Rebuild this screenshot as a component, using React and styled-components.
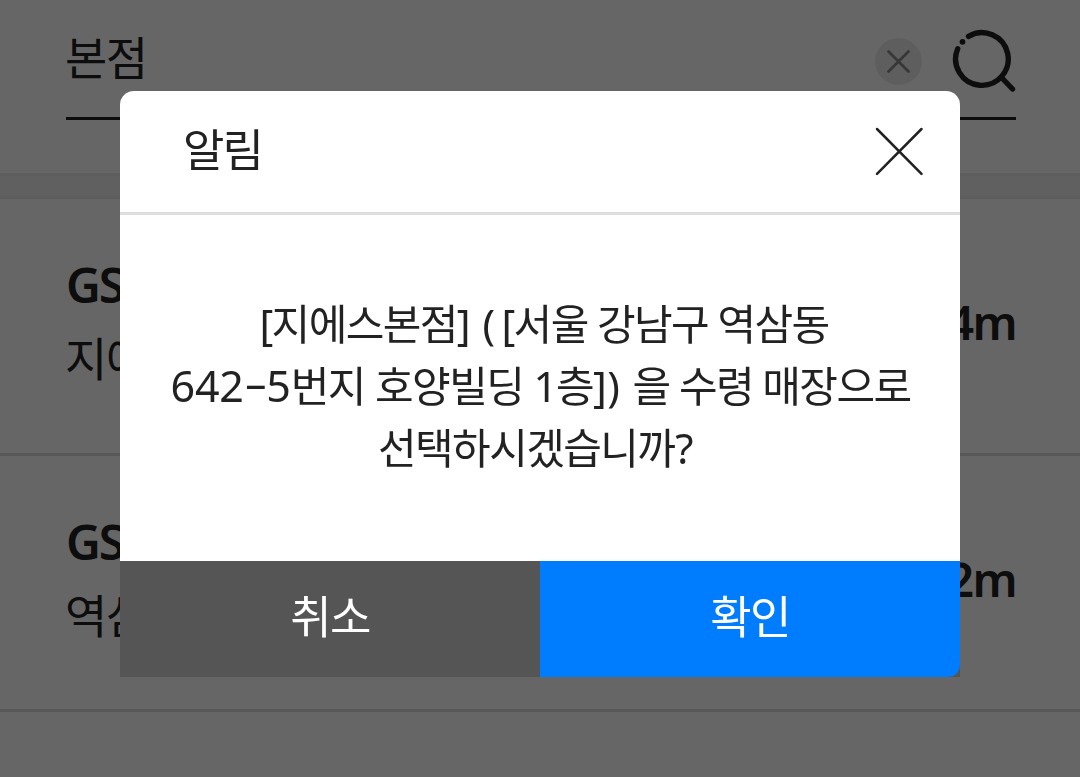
import React from 'react';
import styled, { createGlobalStyle } from 'styled-components';

const GlobalStyle = createGlobalStyle`
    * {
        box-sizing: border-box;
    }
    body {
        margin: 0;
        overflow: hidden;
        background: #fff;
        color: #222;
        font-family: 'Noto Sans', 'Noto Sans CJK KR', sans-serif;
    }
    button {
        padding: 0;
        border: 0;
        background: none;
        color: inherit;
        font: inherit;
        cursor: pointer;
    }
    svg {
        display: block;
    }
`;

const Page = styled.main`
    height: 777px;
    overflow: hidden;
`;

const SearchArea = styled.section`
    height: 173px;
    padding: 0 64px 0 66px;
`;

const SearchBar = styled.div`
    height: 120px;
    display: flex;
    align-items: flex-start;
    border-bottom: 3px solid #222;
`;

const Keyword = styled.div`
    flex: 1;
    padding-top: 27px;
    margin-left: -1px;
    font-size: 46px;
    line-height: 60px;
    letter-spacing: -1.6px;
`;

const ClearButton = styled.button`
    width: 47px;
    height: 47px;
    margin: 38px 30px 0 0;
`;

const SearchButton = styled.button`
    width: 64px;
    height: 64px;
    margin-top: 28px;
`;

const Divider = styled.div`
    height: 26px;
    background: #f0f0f0;
    border-top: 3px solid #e8e8e8;
    border-bottom: 3px solid #e8e8e8;
`;

const StoreItem = styled.article`
    height: ${({ $height }) => $height}px;
    padding: 53px 64px 0 66px;
    display: flex;
    justify-content: space-between;
    border-bottom: 3px solid #dcdcdc;
`;

const StoreName = styled.h2`
    margin: 0;
    font-size: 48px;
    line-height: 66px;
    font-weight: 600;
    letter-spacing: -2px;
`;

const StoreAddress = styled.p`
    margin: 7px 0 0 -1px;
    font-size: 46px;
    line-height: 66px;
    letter-spacing: -1.4px;
`;

const Distance = styled.strong`
    padding-top: 37px;
    font-size: 47px;
    line-height: 66px;
    font-weight: 600;
    letter-spacing: -1.6px;
`;

const Overlay = styled.div`
    position: fixed;
    inset: 0;
    padding-top: 91px;
    display: flex;
    justify-content: center;
    align-items: flex-start;
    background: rgba(0, 0, 0, 0.6);
`;

const Modal = styled.div`
    width: 840px;
    border-radius: 14px 14px 0 0;
    background: #fff;
    overflow: hidden;
`;

const ModalHeader = styled.div`
    height: 124px;
    padding: 0 36px 0 63px;
    display: flex;
    justify-content: space-between;
    align-items: flex-start;
    border-bottom: 3px solid #ddd;
`;

const ModalTitle = styled.h1`
    margin: 0;
    padding-top: 29px;
    font-size: 45px;
    line-height: 60px;
    font-weight: 400;
    letter-spacing: -1.8px;
`;

const CloseButton = styled.button`
    width: 49px;
    height: 49px;
    margin-top: 36px;
`;

const Message = styled.div`
    height: 346px;
    padding-top: 78px;
    display: flex;
    flex-direction: column;
    align-items: center;
    font-size: 42px;
`;

const Line = styled.p`
    margin: 0;
    padding-left: ${({ $indent }) => $indent || 0}px;
    padding-right: ${({ $outdent }) => $outdent || 0}px;
    height: 62px;
    line-height: 62px;
    white-space: nowrap;
    letter-spacing: -1.6px;
`;

const Part = styled.span`
    margin-left: ${({ $before }) => $before || 0}px;
`;

const Digits = styled.span`
    font-size: 43px;
    letter-spacing: -0.2px;
`;

const Dash = styled.span`
    display: inline-block;
    margin: 0 4px 0 5px;
    letter-spacing: 0;
    transform: translateY(-3px) scaleX(1.75);
`;

const ModalFooter = styled.div`
    height: 116px;
    display: flex;
    background: #555;
`;

const FooterButton = styled.button`
    flex: 1;
    padding-bottom: 10px;
    color: #fff;
    font-size: 45px;
    letter-spacing: -1.6px;
    background: ${({ $primary }) => ($primary ? '#007dff' : '#555')};
    border-radius: ${({ $primary }) => ($primary ? '0 0 12px 0' : '0')};
`;

const stores = [
    { name: 'GS', address: '지에', distance: '4m', height: 257 },
    { name: 'GS', address: '역삼', distance: '2m', height: 256 },
];

const ClearIcon = () => (
    <svg width="47" height="47" viewBox="0 0 47 47" fill="none">
        <circle cx="23.5" cy="23.5" r="23.5" fill="#ececec" />
        <path d="M13.5 13.5L33.5 33.5M33.5 13.5L13.5 33.5" stroke="#8a8a8a" strokeWidth="2.8" strokeLinecap="round" />
    </svg>
);

const SearchIcon = () => (
    <svg width="64" height="64" viewBox="0 0 64 64" fill="none" stroke="#222" strokeWidth="5.4" strokeLinecap="round">
        <path d="M16.5 8.4A26.3 26.3 0 1 1 5.7 20.8" />
        <path d="M50 50L60.5 61" />
        <circle cx="10.5" cy="13.8" r="2.9" fill="#222" stroke="none" />
    </svg>
);

const CloseIcon = () => (
    <svg width="49" height="49" viewBox="0 0 49 49" fill="none">
        <path d="M2 2L46.5 46.8M46.5 2L2 46.8" stroke="#222" strokeWidth="2.5" strokeLinecap="round" />
    </svg>
);

const StoreList = () => (
    <>
        {stores.map((store) => (
            <StoreItem key={store.address} $height={store.height}>
                <div>
                    <StoreName>{store.name}</StoreName>
                    <StoreAddress>{store.address}</StoreAddress>
                </div>
                <Distance>{store.distance}</Distance>
            </StoreItem>
        ))}
    </>
);

const ConfirmModal = () => (
    <Overlay>
        <Modal role="dialog" aria-modal="true">
            <ModalHeader>
                <ModalTitle>알림</ModalTitle>
                <CloseButton aria-label="닫기"><CloseIcon /></CloseButton>
            </ModalHeader>
            <Message>
                <Line $indent={8}>
                    [지에스본점] <Part $before={4}>(</Part><Part $before={8}>[서울 강남구 역삼동</Part>
                </Line>
                <Line $indent={1}>
                    <Digits>642</Digits><Dash>-</Dash><Digits>5</Digits>번지 <Part $before={1}>호양빌딩 </Part>
                    <Part $before={1}>1층]</Part><Part $before={2}>) </Part>
                    <Part $before={5}>을 수령 매장으로</Part>
                </Line>
                <Line $outdent={10}>선택하시겠습니까<Part $before={1}>?</Part></Line>
            </Message>
            <ModalFooter>
                <FooterButton>취소</FooterButton>
                <FooterButton $primary>확인</FooterButton>
            </ModalFooter>
        </Modal>
    </Overlay>
);

const App = () => (
    <>
        <GlobalStyle />
        <Page>
            <SearchArea>
                <SearchBar>
                    <Keyword>본점</Keyword>
                    <ClearButton aria-label="지우기"><ClearIcon /></ClearButton>
                    <SearchButton aria-label="검색"><SearchIcon /></SearchButton>
                </SearchBar>
            </SearchArea>
            <Divider />
            <StoreList />
        </Page>
        <ConfirmModal />
    </>
);

export default App;
